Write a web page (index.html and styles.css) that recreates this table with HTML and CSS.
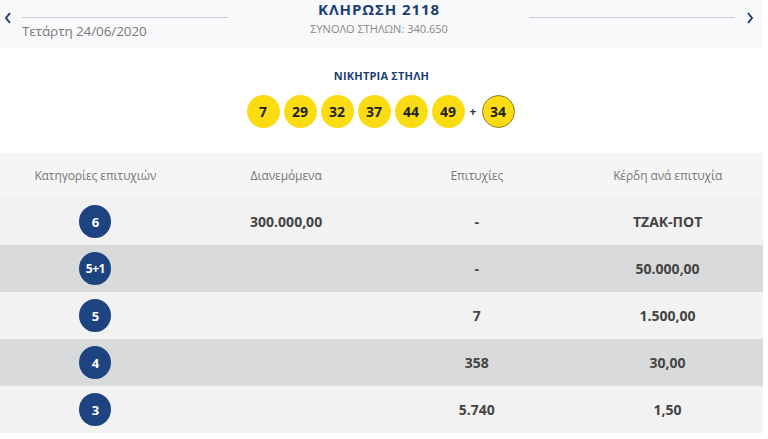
FILE: index.html
```html
<!DOCTYPE html>
<html lang="el">
<head>
<meta charset="utf-8">
<title>ΚΛΗΡΩΣΗ 2118</title>
<link rel="stylesheet" href="styles.css">
</head>
<body>
<div class="page">
  <header class="topbar">
    <div class="side left">
      <svg class="arrow" width="10" height="14" viewBox="0 0 10 14"><path d="M7 2 L3 7 L7 12" fill="none" stroke="#1d3f75" stroke-width="2"/></svg>
      <div class="side-body">
        <div class="rule"></div>
        <div class="date">Τετάρτη 24/06/2020</div>
      </div>
    </div>
    <div class="center">
      <div class="draw">ΚΛΗΡΩΣΗ 2118</div>
      <div class="total">ΣΥΝΟΛΟ ΣΤΗΛΩΝ: 340.650</div>
    </div>
    <div class="side right">
      <div class="side-body"><div class="rule"></div></div>
      <svg class="arrow" width="10" height="14" viewBox="0 0 10 14"><path d="M3 2 L7 7 L3 12" fill="none" stroke="#1d3f75" stroke-width="2"/></svg>
    </div>
  </header>
  <section class="winning">
    <div class="win-title">ΝΙΚΗΤΡΙΑ ΣΤΗΛΗ</div>
    <div class="balls">
      <span class="ball">7</span>
      <span class="ball">29</span>
      <span class="ball">32</span>
      <span class="ball">37</span>
      <span class="ball">44</span>
      <span class="ball">49</span>
      <span class="plus">+</span>
      <span class="ball bonus">34</span>
    </div>
  </section>
  <div class="table">
    <div class="row head">
      <div>Κατηγορίες επιτυχιών</div>
      <div>Διανεμόμενα</div>
      <div>Επιτυχίες</div>
      <div>Κέρδη ανά επιτυχία</div>
    </div>
    <div class="row light">
      <div><span class="badge">6</span></div>
      <div>300.000,00</div>
      <div>-</div>
      <div>ΤΖΑΚ-ΠΟΤ</div>
    </div>
    <div class="row dark">
      <div><span class="badge small">5+1</span></div>
      <div></div>
      <div>-</div>
      <div>50.000,00</div>
    </div>
    <div class="row light">
      <div><span class="badge">5</span></div>
      <div></div>
      <div>7</div>
      <div>1.500,00</div>
    </div>
    <div class="row dark">
      <div><span class="badge">4</span></div>
      <div></div>
      <div>358</div>
      <div>30,00</div>
    </div>
    <div class="row light">
      <div><span class="badge">3</span></div>
      <div></div>
      <div>5.740</div>
      <div>1,50</div>
    </div>
  </div>
</div>
</body>
</html>
```

FILE: styles.css
```css
* { box-sizing: border-box; }
html, body { margin: 0; padding: 0; background: #ffffff; }
body { font-family: "Open Sans", "Noto Sans", sans-serif; color: #444; }
.page { width: 763px; }

.topbar {
  height: 48px;
  background: #f8f9fb;
  display: flex;
  align-items: flex-start;
}
.side { flex: 1; display: flex; align-items: flex-start; padding-top: 11px; }
.side.left { padding-left: 3px; }
.side.right { padding-right: 8px; justify-content: flex-end; }
.arrow { flex: none; }
.side.left .arrow { margin-right: 9px; }
.side.right .arrow { margin-left: 10px; }
.side-body { flex: 1; }
.side.left .side-body { max-width: 206px; }
.side.right .side-body { max-width: 206px; }
.rule { height: 1px; background: #c9cdd3; margin-top: 6px; }
.date { font-size: 13.5px; color: #7a7a7a; margin-top: 4px; line-height: 18px; letter-spacing: -0.1px; }
.center { width: 216px; text-align: center; padding-top: 0; }
.draw { font-size: 15px; font-weight: 700; color: #1d3f75; line-height: 18px; letter-spacing: 0.9px; }
.total { font-size: 11px; color: #888; margin-top: 4px; line-height: 14px; }

.winning { height: 105px; padding-top: 21px; text-align: center; }
.win-title { font-size: 11px; font-weight: 700; color: #1d3f75; line-height: 14px; letter-spacing: 0.2px; }
.balls { display: flex; justify-content: center; align-items: center; gap: 4px; margin-top: 12px; padding-right: 2px; }
.ball {
  width: 33px; height: 33px; border-radius: 50%;
  background: #fbdc13; color: #222;
  font-size: 14px; font-weight: 700;
  display: flex; align-items: center; justify-content: center;
}
.ball.bonus { border: 1.5px solid #8b7d2c; }
.plus { font-size: 12px; font-weight: 700; color: #333; width: 9px; text-align: center; }

.table { display: flex; flex-direction: column; }
.row { display: grid; grid-template-columns: repeat(4, 1fr); align-items: center; text-align: center; height: 47px; }
.row > div { display: flex; justify-content: center; align-items: center; }
.row.head { height: 45px; background: #f5f5f5; font-size: 12px; color: #777; font-weight: 400; letter-spacing: -0.1px; }
.row.light { background: #f2f2f2; font-size: 14px; font-weight: 700; color: #444; }
.row.dark { background: #d9dadb; font-size: 14px; font-weight: 700; color: #444; }
.badge {
  width: 32px; height: 33px; border-radius: 50%;
  background: #1d4481; color: #fff;
  font-size: 13px; font-weight: 700;
  display: flex; align-items: center; justify-content: center;
}
.badge.small { font-size: 12px; letter-spacing: -0.5px; }
```
